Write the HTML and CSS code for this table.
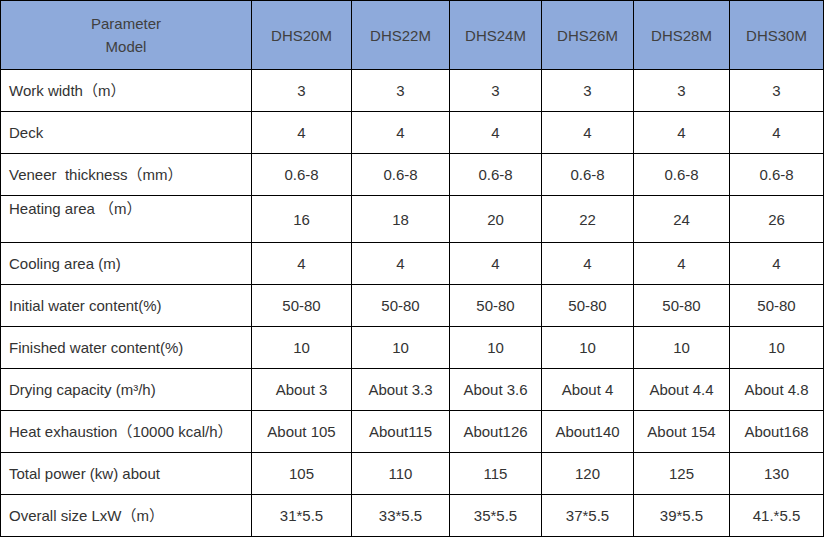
FILE: index.html
```html
<!DOCTYPE html>
<html>
<head>
<meta charset="utf-8">
<link rel="stylesheet" href="styles.css">
</head>
<body>
<table class="spec">
  <colgroup>
    <col class="c-param">
    <col class="c1"><col class="c2"><col class="c3"><col class="c4"><col class="c5"><col class="c6">
  </colgroup>
  <thead>
    <tr class="head">
      <th class="param-head">Parameter<br>Model</th>
      <th>DHS20M</th><th>DHS22M</th><th>DHS24M</th><th>DHS26M</th><th>DHS28M</th><th>DHS30M</th>
    </tr>
  </thead>
  <tbody>
    <tr><td class="label">Work width（m）</td><td>3</td><td>3</td><td>3</td><td>3</td><td>3</td><td>3</td></tr>
    <tr><td class="label">Deck</td><td>4</td><td>4</td><td>4</td><td>4</td><td>4</td><td>4</td></tr>
    <tr><td class="label">Veneer&nbsp; thickness（mm）</td><td>0.6-8</td><td>0.6-8</td><td>0.6-8</td><td>0.6-8</td><td>0.6-8</td><td>0.6-8</td></tr>
    <tr class="tall"><td class="label top">Heating area （m）</td><td>16</td><td>18</td><td>20</td><td>22</td><td>24</td><td>26</td></tr>
    <tr><td class="label">Cooling area (m)</td><td>4</td><td>4</td><td>4</td><td>4</td><td>4</td><td>4</td></tr>
    <tr><td class="label">Initial water content(%)</td><td>50-80</td><td>50-80</td><td>50-80</td><td>50-80</td><td>50-80</td><td>50-80</td></tr>
    <tr><td class="label">Finished water content(%)</td><td>10</td><td>10</td><td>10</td><td>10</td><td>10</td><td>10</td></tr>
    <tr><td class="label">Drying capacity (m³/h)</td><td>About 3</td><td>About 3.3</td><td>About 3.6</td><td>About 4</td><td>About 4.4</td><td>About 4.8</td></tr>
    <tr><td class="label">Heat exhaustion（10000 kcal/h）</td><td>About 105</td><td>About115</td><td>About126</td><td>About140</td><td>About 154</td><td>About168</td></tr>
    <tr><td class="label">Total power (kw) about</td><td>105</td><td>110</td><td>115</td><td>120</td><td>125</td><td>130</td></tr>
    <tr><td class="label">Overall size LxW（m）</td><td>31*5.5</td><td>33*5.5</td><td>35*5.5</td><td>37*5.5</td><td>39*5.5</td><td>41.*5.5</td></tr>
  </tbody>
</table>
</body>
</html>
```

FILE: styles.css
```css
html, body {
  margin: 0;
  padding: 0;
  background: #ffffff;
}

.spec {
  border-collapse: collapse;
  table-layout: fixed;
  width: 823px;
  font-family: "Liberation Sans", Arial, "Noto Sans CJK SC", sans-serif;
  font-size: 15px;
  color: #333333;
}

.c-param { width: 251px; }
.c1 { width: 100px; }
.c2 { width: 98px; }
.c3 { width: 92px; }
.c4 { width: 92px; }
.c5 { width: 96px; }
.c6 { width: 94px; }

.spec th,
.spec td {
  border: 1px solid #000000;
  text-align: center;
  vertical-align: middle;
  padding: 0 2px;
  line-height: 21px;
  white-space: nowrap;
}

.spec tr { height: 42px; }

.spec .head { height: 69px; }

.spec th {
  background: #8eaadb;
  font-weight: normal;
  color: #404040;
  line-height: 23px;
}

.spec td.label {
  text-align: left;
  padding-left: 8px;
}

.spec tr.tall { height: 47px; }

.spec td.top {
  vertical-align: top;
  padding-top: 2px;
}
```
